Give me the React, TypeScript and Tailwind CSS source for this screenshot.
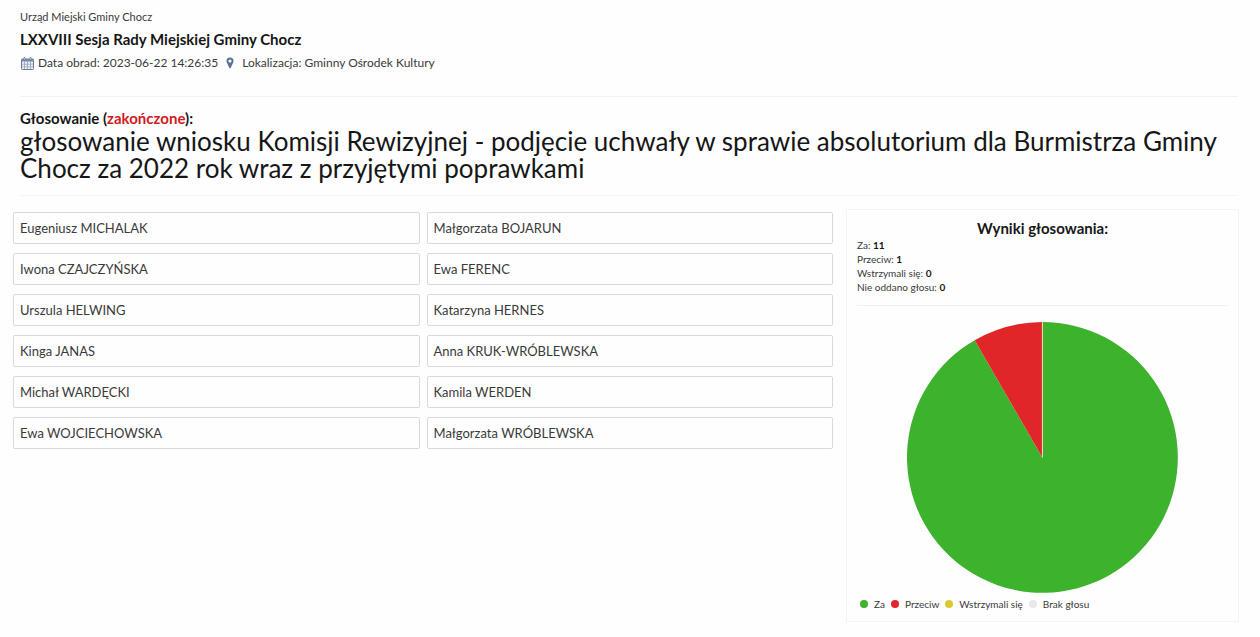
const councillors = [
  "Eugeniusz MICHALAK",
  "Małgorzata BOJARUN",
  "Iwona CZAJCZYŃSKA",
  "Ewa FERENC",
  "Urszula HELWING",
  "Katarzyna HERNES",
  "Kinga JANAS",
  "Anna KRUK-WRÓBLEWSKA",
  "Michał WARDĘCKI",
  "Kamila WERDEN",
  "Ewa WOJCIECHOWSKA",
  "Małgorzata WRÓBLEWSKA",
];

const results = [
  { label: "Za", legend: "Za", votes: 11, color: "#3db22d" },
  { label: "Przeciw", legend: "Przeciw", votes: 1, color: "#e02628" },
  { label: "Wstrzymali się", legend: "Wstrzymali się", votes: 0, color: "#d8cb32" },
  { label: "Nie oddano głosu", legend: "Brak głosu", votes: 0, color: "#e8e8e8" },
];

function CalendarIcon() {
  return (
    <svg viewBox="0 0 13 13" className="h-[13px] w-[13px]" aria-hidden="true">
      <rect x="0.5" y="2" width="12" height="10.5" rx="0.8" fill="#eef1f5" stroke="#66799a" />
      <rect x="0.5" y="2" width="12" height="2.6" fill="#7c8dab" />
      <path
        d="M3.5 4.6v7.9M6.5 4.6v7.9M9.5 4.6v7.9M0.5 7.2h12M0.5 9.8h12"
        stroke="#8a9ab4"
        strokeWidth="0.7"
      />
      <path d="M3.5 0.8v2M9.5 0.8v2" stroke="#566b8f" strokeWidth="1.6" strokeLinecap="round" />
      <path d="M3.5 1v1.6M9.5 1v1.6" stroke="#dfe5ee" strokeWidth="0.6" strokeLinecap="round" />
    </svg>
  );
}

function MarkerIcon() {
  return (
    <svg viewBox="0 0 8 12" className="h-3 w-2" aria-hidden="true">
      <path
        fillRule="evenodd"
        fill="#5b7196"
        d="M4 0.5a3.5 3.5 0 0 1 3.5 3.6c0 0.7-0.2 1.2-0.5 1.8L4.6 11a0.7 0.7 0 0 1-1.2 0L1 5.9C0.7 5.3 0.5 4.8 0.5 4.1A3.5 3.5 0 0 1 4 0.5zM4 2.4a1.6 1.6 0 1 0 0 3.2a1.6 1.6 0 0 0 0-3.2z"
      />
    </svg>
  );
}

function PieChart() {
  const total = results.reduce((sum, r) => sum + r.votes, 0);
  const radius = 136;
  let start = 0;

  const slices = results
    .filter((r) => r.votes > 0)
    .map((r) => {
      const end = start + (r.votes / total) * 2 * Math.PI;
      const point = (a: number) =>
        `${(radius * Math.sin(a)).toFixed(2)} ${(-radius * Math.cos(a)).toFixed(2)}`;
      const large = end - start > Math.PI ? 1 : 0;
      const d = `M0 0L${point(start)}A${radius} ${radius} 0 ${large} 1 ${point(end)}Z`;
      start = end;
      return { d, color: r.color, label: r.label };
    });

  return (
    <svg
      viewBox="-136 -136 272 272"
      className="mx-auto block w-[73%]"
      role="img"
      aria-label="Wyniki głosowania"
    >
      {slices.map((s) => (
        <path key={s.label} d={s.d} fill={s.color} />
      ))}
      <path d="M0 0V-136" stroke="#e9e4b8" strokeWidth="1" />
    </svg>
  );
}

export default function App() {
  return (
    <div className="min-h-screen bg-[#fefefe] pt-2 pb-3 font-['Lato','Open_Sans',sans-serif] text-[#3a3a3a]">
      <header className="mr-[22px] ml-5 border-b border-[#f2f2f2] pb-6">
        <p className="text-[11px] leading-[18px]">Urząd Miejski Gminy Chocz</p>
        <h1 className="mt-[3px] text-[15px] leading-5 font-bold text-[#161616]">
          LXXVIII Sesja Rady Miejskiej Gminy Chocz
        </h1>
        <p className="mt-[5px] flex items-center text-[12px] leading-[18px]">
          <span className="mr-1 ml-px">
            <CalendarIcon />
          </span>
          Data obrad: 2023-06-22 14:26:35
          <span className="mx-2">
            <MarkerIcon />
          </span>
          Lokalizacja: Gminny Ośrodek Kultury
        </p>
      </header>

      <section className="mr-[22px] ml-5 border-b border-[#f5f5f5] pt-[11px] pb-[13px] text-[#161616]">
        <p className="text-[15px] leading-5 font-bold">
          Głosowanie (<span className="text-[#cf1b22]">zakończone</span>):
        </p>
        <h2 className="text-[26px] leading-[27px]">
          głosowanie wniosku Komisji Rewizyjnej - podjęcie uchwały w sprawie absolutorium dla
          Burmistrza Gminy Chocz za 2022 rok wraz z przyjętymi poprawkami
        </h2>
      </section>

      <main className="mt-[13px] mr-[21px] ml-[13px] grid grid-cols-[820fr_393fr] items-start gap-[13px]">
        <ul className="mt-[3px] grid grid-cols-2 gap-x-[7px] gap-y-[9px]">
          {councillors.map((name) => (
            <li
              key={name}
              className="rounded-xs border border-[#d9d9d9] px-1.5 py-1.5 text-[13px] leading-[18px]"
            >
              {name}
            </li>
          ))}
        </ul>

        <aside className="border border-[#f3f3f3] px-2.5 pt-2 pb-[9px]">
          <h3 className="text-center text-[15px] leading-5 font-bold text-[#161616]">
            Wyniki głosowania:
          </h3>
          <div className="border-b border-[#f0f0f0] pb-[11px] text-[10px] leading-[14px]">
            {results.map((r) => (
              <p key={r.label}>
                {r.label}: <strong className="text-[#161616]">{r.votes}</strong>
              </p>
            ))}
          </div>
          <div className="pt-4">
            <PieChart />
          </div>
          <ul className="mt-[3px] ml-[3px] flex text-[10px] leading-4">
            {results.map((r) => (
              <li key={r.label} className="mr-1.5 flex items-center gap-1.5">
                <span className="h-2 w-2 rounded-full" style={{ backgroundColor: r.color }} />
                {r.legend}
              </li>
            ))}
          </ul>
        </aside>
      </main>
    </div>
  );
}
